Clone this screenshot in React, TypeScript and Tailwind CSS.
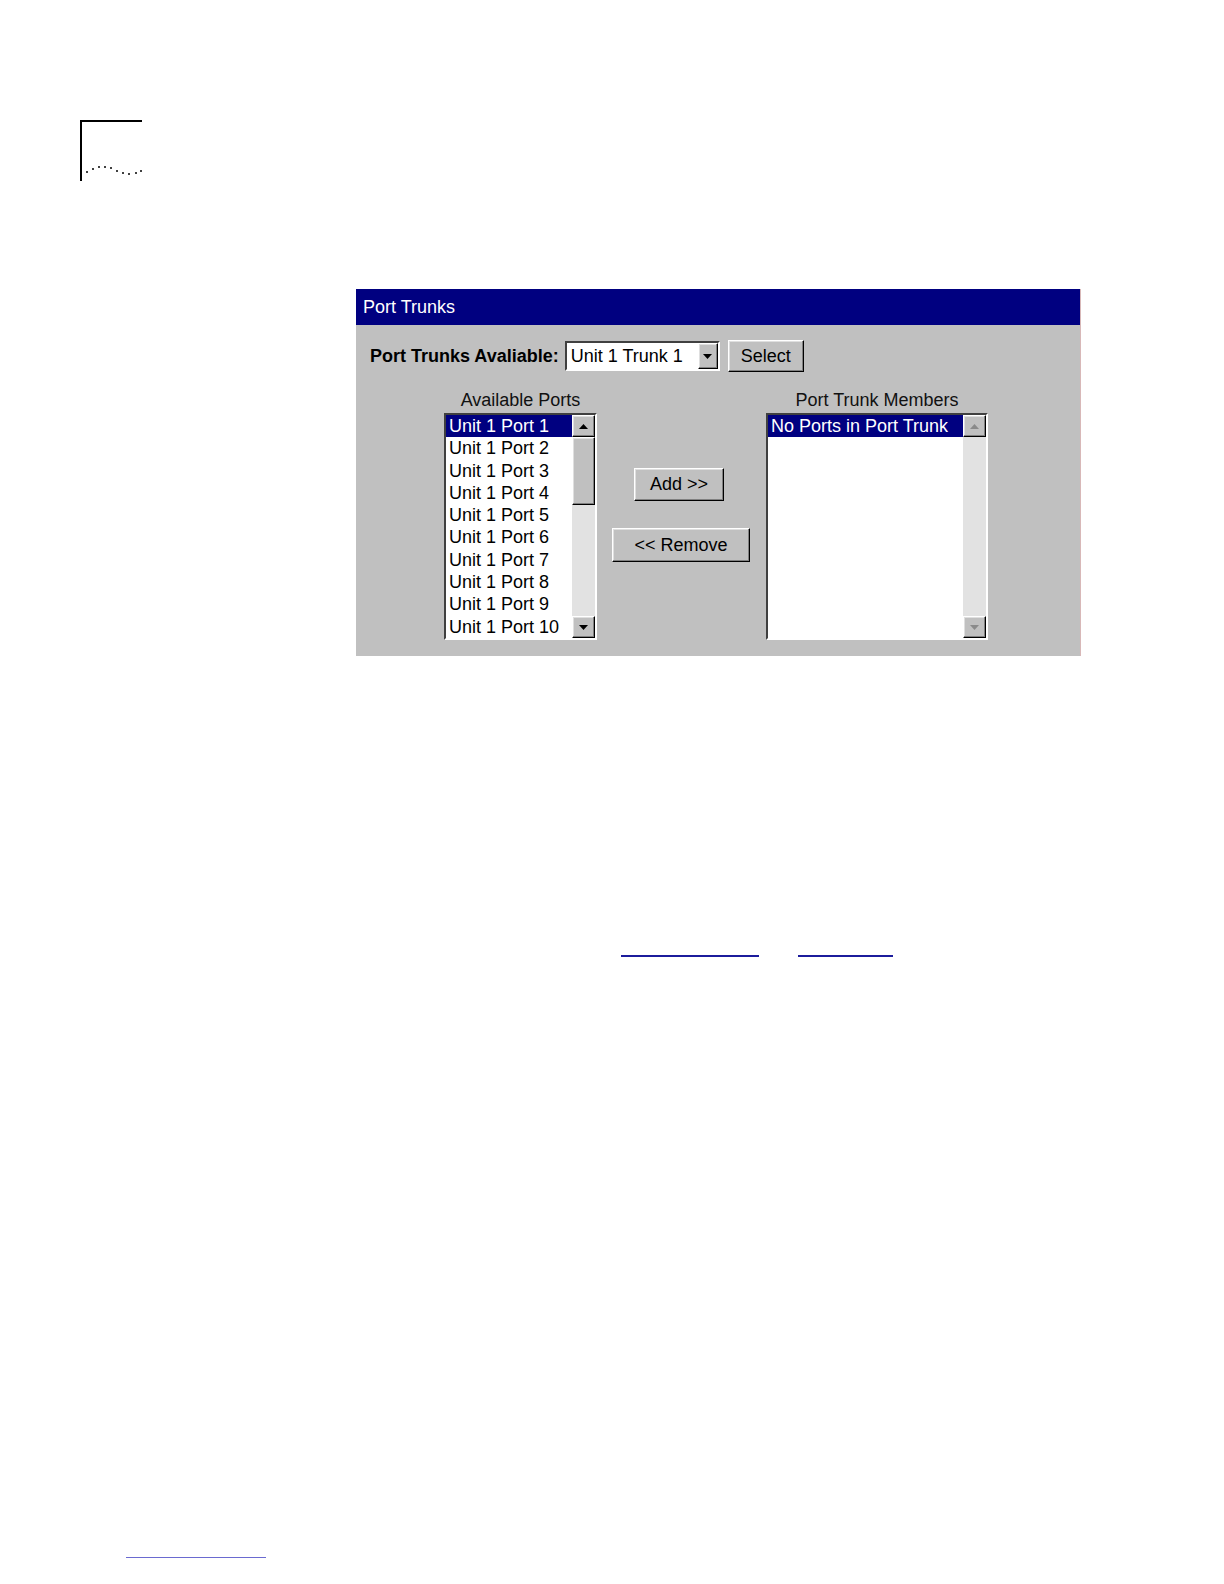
import React from 'react'

const ports = Array.from({ length: 10 }, (_, i) => `Unit 1 Port ${i + 1}`)

const raised =
  'border border-t-white border-l-white border-b-black border-r-black shadow-[inset_-1px_-1px_#808080,inset_1px_1px_#dfdfdf] bg-[#c0c0c0]'
const sunken =
  'border-2 border-t-[#404040] border-l-[#404040] border-b-white border-r-white'

function Arrow({ up, disabled }: { up?: boolean; disabled?: boolean }) {
  return (
    <svg width="9" height="5" viewBox="0 0 9 5" className={up ? '' : 'rotate-180'}>
      <path d="M4.5 0 L9 5 L0 5 Z" fill={disabled ? '#8a8a8a' : '#000'} />
    </svg>
  )
}

function ScrollButton({ up, disabled }: { up?: boolean; disabled?: boolean }) {
  return (
    <div className={`${raised} h-[22px] w-full flex items-center justify-center shrink-0`}>
      <Arrow up={up} disabled={disabled} />
    </div>
  )
}

function Button({ label, className }: { label: string; className: string }) {
  return (
    <div className={`${raised} flex items-center justify-center text-[18px] text-black ${className}`}>
      {label}
    </div>
  )
}

function ListBox({
  items,
  width,
  thumb,
  disabled,
}: {
  items: string[]
  width: string
  thumb?: boolean
  disabled?: boolean
}) {
  return (
    <div className={`${sunken} ${width} h-[227px] bg-white flex`}>
      <div className="flex-1 flex flex-col min-w-0">
        {items.map((item, i) => (
          <div
            key={item}
            className={`h-[22.3px] leading-[22.3px] pl-[3px] text-[18px] whitespace-nowrap ${
              i === 0 ? 'bg-[#000080] text-white' : 'text-black'
            }`}
          >
            {item}
          </div>
        ))}
      </div>
      <div className="w-[23px] flex flex-col bg-[#e2e2e2]">
        <ScrollButton up disabled={disabled} />
        {thumb && <div className={`${raised} h-[68px] w-full`} />}
        <div className="flex-1" />
        <ScrollButton disabled={disabled} />
      </div>
    </div>
  )
}

export default function App() {
  return (
    <div className="bg-white font-['Liberation_Sans',Arial,sans-serif] pt-[120px] pb-[10px]">
      <div className="ml-[80px] w-[62px] h-[61px] border-l-2 border-t-2 border-black">
        <svg width="62" height="61" viewBox="0 0 62 61" className="block">
          {[
            [5, 50],
            [11, 47],
            [17, 45],
            [23, 45],
            [29, 46],
            [35, 49],
            [41, 51],
            [47, 52],
            [54, 51],
            [59, 49],
          ].map(([x, y]) => (
            <circle key={x} cx={x} cy={y} r="1" fill="#000" />
          ))}
        </svg>
      </div>

      <div className="ml-[356px] mt-[108px] w-[725px] h-[367px] flex flex-col border-r border-[#d8b8b8]">
        <div className="h-[36px] bg-[#000080] text-white text-[18px] pl-[7px] flex items-center">
          Port Trunks
        </div>
        <div className="flex-1 bg-[#c0c0c0] pt-[15px]">
          <div className="flex items-center pl-[14px]">
            <span className="font-bold text-[18px] text-black">Port Trunks Avaliable:</span>
            <div className={`${sunken} ml-[6px] w-[155px] h-[30px] bg-white flex items-center`}>
              <span className="flex-1 pl-[4px] text-[18px] text-black whitespace-nowrap">Unit 1 Trunk 1</span>
              <div className={`${raised} w-[20px] h-full flex items-center justify-center`}>
                <Arrow />
              </div>
            </div>
            <Button label="Select" className="ml-[8px] w-[76px] h-[32px]" />
          </div>

          <div className="flex pl-[88px] mt-[17px]">
            <div className="flex flex-col items-center">
              <div className="h-[24px] text-[18px] text-[#111] leading-[22px]">Available Ports</div>
              <ListBox items={ports} width="w-[153px]" thumb />
            </div>
            <div className="ml-[15px] w-[138px] flex flex-col items-center pt-[79px]">
              <Button label="Add >>" className="w-[90px] h-[33px] ml-[-4px]" />
              <Button label="<< Remove" className="w-[138px] h-[34px] mt-[27px]" />
            </div>
            <div className="ml-[16px] flex flex-col items-center">
              <div className="h-[24px] text-[18px] text-[#111] leading-[22px]">Port Trunk Members</div>
              <ListBox items={['No Ports in Port Trunk']} width="w-[222px]" disabled />
            </div>
          </div>
        </div>
      </div>

      <div className="mt-[299px] ml-[621px] flex">
        <span className="w-[138px] h-[2px] bg-[#1c1c9c]" />
        <span className="ml-[39px] w-[95px] h-[2px] bg-[#1c1c9c]" />
      </div>

      <div className="mt-[600px] ml-[126px] w-[140px] h-px bg-[#6a6ad0]" />
    </div>
  )
}
